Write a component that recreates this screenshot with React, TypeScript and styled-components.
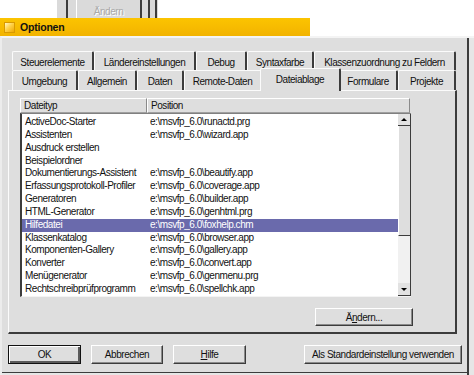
import React from "react";
import styled, { createGlobalStyle, css } from "styled-components";

const GlobalStyle = createGlobalStyle`
  html, body {
    margin: 0;
    padding: 0;
    background: #fff;
  }
  body {
    font-family: "Liberation Sans", Arial, sans-serif;
    font-size: 10px;
    letter-spacing: -0.45px;
    color: #111;
  }
`;

const FACE = "#dedede";
const DARK = "#3c3c3c";
const LIGHT = "#fbfbfb";

const Screen = styled.div`
  width: 474px;
  height: 375px;
  overflow: hidden;
  display: flex;
  flex-direction: column;
`;

const BackStrip = styled.div`
  height: 18px;
  display: flex;
  padding-left: 57px;
`;

const BackPane = styled.div`
  width: 101px;
  height: 18px;
  box-sizing: border-box;
  padding-left: 9px;
  display: flex;
  background: #dadada;
`;

const BackRule = styled.div<{ $gap: number }>`
  width: 2px;
  margin-left: ${p => p.$gap}px;
  background: ${DARK};
`;

const GhostButton = styled.div`
  width: 66px;
  margin-left: 8px;
  box-sizing: border-box;
  border-left: 1px solid #fff;
  border-right: 2px solid ${DARK};
  display: flex;
  align-items: flex-end;
  justify-content: center;
  padding-bottom: 1px;
  line-height: 11px;
  color: #a9a9a9;
  text-shadow: 1px 1px 0 #fff;
`;

const TitleBar = styled.div`
  width: 310px;
  height: 18px;
  box-sizing: border-box;
  padding-left: 4px;
  display: flex;
  align-items: center;
  gap: 5px;
  background: linear-gradient(#fcc400, #f2b300);
`;

const TitleIcon = styled.div`
  width: 11px;
  height: 11px;
  box-sizing: border-box;
  border: 1px solid #d99a00;
  background: linear-gradient(135deg, #fff6c8 0%, #ffd24a 45%, #f0a800 100%);
`;

const TitleText = styled.span`
  font-weight: bold;
  font-size: 10.5px;
  letter-spacing: -0.2px;
`;

const DialogBody = styled.div`
  flex: 1;
  box-sizing: border-box;
  padding: 13px 0 0 6px;
  background: ${FACE};
  border-top: 2px solid #f4f4f4;
  border-left: 2px solid #ececec;
  box-shadow:
    inset -5px 0 0 #e6e6e6,
    inset -7px 0 0 ${DARK},
    inset 0 -2px 0 #e6e6e6,
    inset 0 -3px 0 ${DARK};
`;

const TabStrip = styled.div`
  width: 449px;
  padding-left: 4px;
  box-sizing: border-box;
  display: flex;
  flex-direction: column;
`;

const TabRow = styled.div<{ $h: number }>`
  display: flex;
  align-items: flex-start;
  height: ${p => p.$h}px;
`;

const Tab = styled.div<{ $w: number; $h: number; $active?: boolean }>`
  width: ${p => p.$w}px;
  height: ${p => p.$h}px;
  box-sizing: border-box;
  flex-shrink: 0;
  padding-top: 5px;
  line-height: 12px;
  text-align: center;
  white-space: nowrap;
  background: ${FACE};
  border-top: 1px solid ${LIGHT};
  border-left: 1px solid ${LIGHT};
  border-right: 2px solid ${DARK};
  border-radius: 2px 2px 0 0;
  ${p => p.$active && css`
    width: ${p.$w + 4}px;
    height: ${p.$h + 3}px;
    margin: -2px -2px 0;
    position: relative;
    z-index: 2;
  `}
`;

const TabPanel = styled.div`
  width: 449px;
  height: 244px;
  box-sizing: border-box;
  padding: 7px 0 0 11px;
  display: flex;
  flex-direction: column;
  background: ${FACE};
  border-top: 1px solid ${LIGHT};
  border-left: 1px solid ${LIGHT};
  border-right: 2px solid ${DARK};
  border-bottom: 2px solid ${DARK};
`;

const ListHeader = styled.div`
  display: flex;
  height: 15px;
`;

const HeaderCell = styled.div<{ $w: number }>`
  width: ${p => p.$w}px;
  box-sizing: border-box;
  padding-left: 3px;
  line-height: 13px;
  border-top: 1px solid #fff;
  border-left: 1px solid #fff;
  border-right: 1px solid #8a8a8a;
  border-bottom: 1px solid #a0a0a0;
`;

const ListBox = styled.div`
  width: 391px;
  height: 184px;
  box-sizing: border-box;
  display: flex;
  background: #fff;
  border-top: 1px solid #808080;
  border-left: 2px solid ${DARK};
  border-bottom: 1px solid #f4f4f4;
`;

const Rows = styled.div`
  flex: 1;
  padding-top: 2px;
`;

const Row = styled.div<{ $selected?: boolean }>`
  display: flex;
  height: 12.85px;
  line-height: 12.85px;
  white-space: nowrap;
  background: ${p => (p.$selected ? "#6a6aac" : "transparent")};
  color: ${p => (p.$selected ? "#fff" : "#111")};
`;

const Cell = styled.div<{ $w?: number }>`
  ${p => (p.$w ? `width: ${p.$w}px;` : "flex: 1;")}
  box-sizing: border-box;
  padding-left: ${p => (p.$w ? 3 : 0)}px;
  overflow: hidden;
`;

const ScrollBar = styled.div`
  width: 13px;
  display: flex;
  flex-direction: column;
  border-right: 1px solid ${DARK};
  box-sizing: border-box;
`;

const ScrollButton = styled.div<{ $h: number }>`
  height: ${p => p.$h}px;
  display: flex;
  align-items: center;
  justify-content: center;
  background: #e2e2e2;
  border-bottom: 1px solid ${DARK};
  box-sizing: border-box;
`;

const Arrow = styled.div<{ $down?: boolean }>`
  width: 0;
  height: 0;
  border-left: 3px solid transparent;
  border-right: 3px solid transparent;
  ${p => (p.$down ? `border-top: 3px solid #000;` : `border-bottom: 3px solid #000;`)}
`;

const Thumb = styled.div`
  height: 110px;
  background: ${FACE};
  border-left: 1px solid #fff;
  border-bottom: 1px solid ${DARK};
  box-sizing: border-box;
`;

const Track = styled.div`
  flex: 1;
  background: #f1f1f1;
`;

const PanelFooter = styled.div`
  width: 393px;
  margin-top: 11px;
  display: flex;
  justify-content: flex-end;
`;

const Button = styled.button<{ $w: number; $h?: number; $default?: boolean }>`
  width: ${p => p.$w}px;
  height: ${p => p.$h ?? 19}px;
  padding: 0;
  box-sizing: border-box;
  font: inherit;
  letter-spacing: inherit;
  color: #111;
  background: ${FACE};
  border: 1px solid;
  border-color: #fff ${DARK} ${DARK} #fff;
  box-shadow: inset -1px -1px 0 #8a8a8a;
  ${p => p.$default && css`
    border-color: #111;
    box-shadow: inset 1px 1px 0 #fff, inset -2px -2px 0 #5a5a5a;
  `}
`;

const ButtonRow = styled.div`
  width: 454px;
  margin-top: 11px;
  display: flex;
  gap: 10px;
`;

const PushRight = styled.div`
  margin-left: auto;
`;

const row1: [string, number][] = [
  ["Steuerelemente", 82],
  ["Ländereinstellungen", 102],
  ["Debug", 51],
  ["Syntaxfarbe", 67],
  ["Klassenzuordnung zu Feldern", 142],
];

const row2: [string, number][] = [
  ["Umgebung", 66],
  ["Allgemein", 59],
  ["Daten", 47],
  ["Remote-Daten", 78],
  ["Dateiablage", 77],
  ["Formulare", 59],
  ["Projekte", 58],
];

const files: [string, string][] = [
  ["ActiveDoc-Starter", "e:\\msvfp_6.0\\runactd.prg"],
  ["Assistenten", "e:\\msvfp_6.0\\wizard.app"],
  ["Ausdruck erstellen", ""],
  ["Beispielordner", ""],
  ["Dokumentierungs-Assistent", "e:\\msvfp_6.0\\beautify.app"],
  ["Erfassungsprotokoll-Profiler", "e:\\msvfp_6.0\\coverage.app"],
  ["Generatoren", "e:\\msvfp_6.0\\builder.app"],
  ["HTML-Generator", "e:\\msvfp_6.0\\genhtml.prg"],
  ["Hilfedatei", "e:\\msvfp_6.0\\foxhelp.chm"],
  ["Klassenkatalog", "e:\\msvfp_6.0\\browser.app"],
  ["Komponenten-Gallery", "e:\\msvfp_6.0\\gallery.app"],
  ["Konverter", "e:\\msvfp_6.0\\convert.app"],
  ["Menügenerator", "e:\\msvfp_6.0\\genmenu.prg"],
  ["Rechtschreibprüfprogramm", "e:\\msvfp_6.0\\spellchk.app"],
];

export default function App() {
  return (
    <Screen>
      <GlobalStyle />
      <BackStrip>
        <BackPane>
          <BackRule $gap={0} />
          <GhostButton>Ändern</GhostButton>
          <BackRule $gap={6} />
          <BackRule $gap={5} />
        </BackPane>
      </BackStrip>

      <TitleBar>
        <TitleIcon />
        <TitleText>Optionen</TitleText>
      </TitleBar>

      <DialogBody>
        <TabStrip>
          <TabRow $h={19}>
            {row1.map(([label, w]) => (
              <Tab key={label} $w={w} $h={19}>{label}</Tab>
            ))}
          </TabRow>
          <TabRow $h={20}>
            {row2.map(([label, w]) => (
              <Tab key={label} $w={w} $h={20} $active={label === "Dateiablage"}>
                {label}
              </Tab>
            ))}
          </TabRow>
        </TabStrip>

        <TabPanel>
          <ListHeader>
            <HeaderCell $w={127}>Dateityp</HeaderCell>
            <HeaderCell $w={263}>Position</HeaderCell>
          </ListHeader>
          <ListBox>
            <Rows>
              {files.map(([type, path]) => (
                <Row key={type} $selected={type === "Hilfedatei"}>
                  <Cell $w={128}>{type}</Cell>
                  <Cell>{path}</Cell>
                </Row>
              ))}
            </Rows>
            <ScrollBar>
              <ScrollButton $h={12}><Arrow /></ScrollButton>
              <Thumb />
              <Track />
              <ScrollButton $h={13}><Arrow $down /></ScrollButton>
            </ScrollBar>
          </ListBox>
          <PanelFooter>
            <Button $w={98} $h={18}>Ä<u>n</u>dern...</Button>
          </PanelFooter>
        </TabPanel>

        <ButtonRow>
          <Button $w={73} $default>OK</Button>
          <Button $w={72}>Abbrechen</Button>
          <Button $w={73}><u>H</u>ilfe</Button>
          <PushRight>
            <Button $w={158}>Als Standardeinstellung verwenden</Button>
          </PushRight>
        </ButtonRow>
      </DialogBody>
    </Screen>
  );
}
